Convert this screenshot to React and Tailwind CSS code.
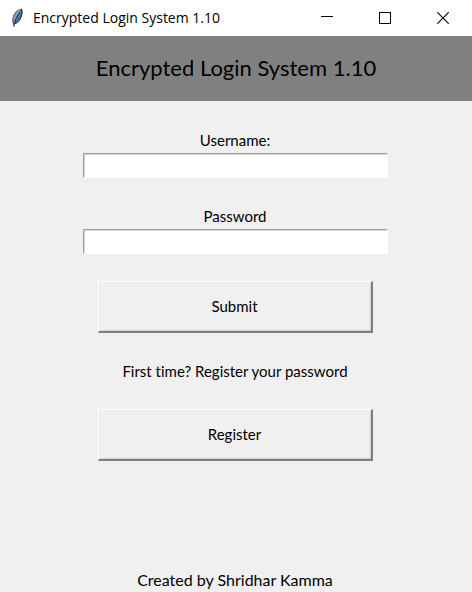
import React from 'react';

function FeatherIcon() {
  return (
    <svg viewBox="0 0 16 20" className="h-5 w-4 shrink-0" aria-hidden="true">
      <path d="M12.4 0.6C9 1.4 5.4 4 4 8C3 10.8 2.8 13 3.6 15L4.8 19L5.6 16C9.4 14.6 11.6 11.6 12.8 7.8C13.6 5.2 13.8 2.4 12.4 0.6Z" fill="#6c7076" />
      <path d="M11.6 2C8.4 3.4 5.8 6.4 4.9 9.6C4.4 11.4 4.4 12.6 4.8 14C6.4 9.6 8.8 5.6 11.6 2Z" fill="#82b0e4" />
      <path d="M12.3 2.6C9.4 6.2 7.2 10.2 5.8 14.4C8.8 13.2 10.6 10.6 11.7 7.2C12.3 5.4 12.5 4.2 12.3 2.6Z" fill="#3f76bc" />
      <path d="M10.8 4.2C8.2 7.8 5.8 12.4 4.8 18.8" fill="none" stroke="#24303c" strokeWidth="0.9" />
      <path d="M12.4 0.9C13.8 3.4 13 7 11.8 9.8C10.6 12.6 8.8 14.6 6 15.8" fill="none" stroke="#25272b" strokeWidth="1" />
    </svg>
  );
}

function TitleBar() {
  const control = 'flex h-9 w-[58px] items-center justify-center';
  return (
    <header className="flex h-9 items-center bg-white pl-[9px]">
      <FeatherIcon />
      <h1 className="ml-2 flex-1 whitespace-nowrap font-['Open_Sans','Noto_Sans',sans-serif] text-sm leading-4">
        Encrypted Login System 1.10
      </h1>
      <div className="flex">
        <button type="button" aria-label="Minimize" className={control}>
          <svg viewBox="0 0 12 12" className="size-3" shapeRendering="crispEdges">
            <path d="M0 4.5H12" stroke="#000" />
          </svg>
        </button>
        <button type="button" aria-label="Maximize" className={control}>
          <svg viewBox="0 0 12 12" className="size-3" shapeRendering="crispEdges">
            <rect x="0.5" y="0.5" width="11" height="11" fill="none" stroke="#000" />
          </svg>
        </button>
        <button type="button" aria-label="Close" className={control}>
          <svg viewBox="0 0 12 12" className="size-3">
            <path d="M0.3 0.3L11.7 11.7M11.7 0.3L0.3 11.7" stroke="#000" strokeWidth="1.1" />
          </svg>
        </button>
      </div>
    </header>
  );
}

function Field({ id, label, type }) {
  return (
    <div className="flex w-full flex-col items-center">
      <label htmlFor={id} className="mb-0.5 leading-[22px]">{label}</label>
      <input
        id={id}
        type={type}
        className="h-[25px] w-full max-w-[305px] border border-t-[#a0a0a0] border-l-[#a0a0a0] border-r-white border-b-white bg-white px-1 shadow-[inset_1px_1px_0_#d4d4d4] outline-none"
      />
    </div>
  );
}

function RaisedButton({ children, type }) {
  return (
    <button
      type={type}
      className="h-[52px] w-full max-w-[275px] border-t border-r-2 border-b-2 border-l border-t-white border-l-white border-r-[#808080] border-b-[#808080] bg-[#f0f0f0] shadow-[inset_1px_1px_0_#e8e8e8,inset_-1px_-1px_0_#d0d0d0]"
    >
      {children}
    </button>
  );
}

export default function App() {
  return (
    <div className="flex min-h-screen flex-col bg-[#f0f0f0] font-['Lato','Noto_Sans',sans-serif] text-[15px] text-black [font-variant-ligatures:none]">
      <TitleBar />
      <h2 className="bg-[#808080] pt-[15px] pb-[17px] text-center text-[22px] leading-[33px]">
        Encrypted Login System 1.10
      </h2>
      <main className="flex flex-1 flex-col pr-0.5">
        <form className="flex flex-col items-center gap-[27px] pt-7" onSubmit={(e) => e.preventDefault()}>
          <Field id="username" label="Username:" type="text" />
          <Field id="password" label="Password" type="password" />
          <RaisedButton type="submit">Submit</RaisedButton>
          <p className="leading-[22px]">First time? Register your password</p>
          <RaisedButton type="button">Register</RaisedButton>
        </form>
      </main>
      <footer className="pr-0.5 text-center text-base leading-6">Created by Shridhar Kamma</footer>
    </div>
  );
}
